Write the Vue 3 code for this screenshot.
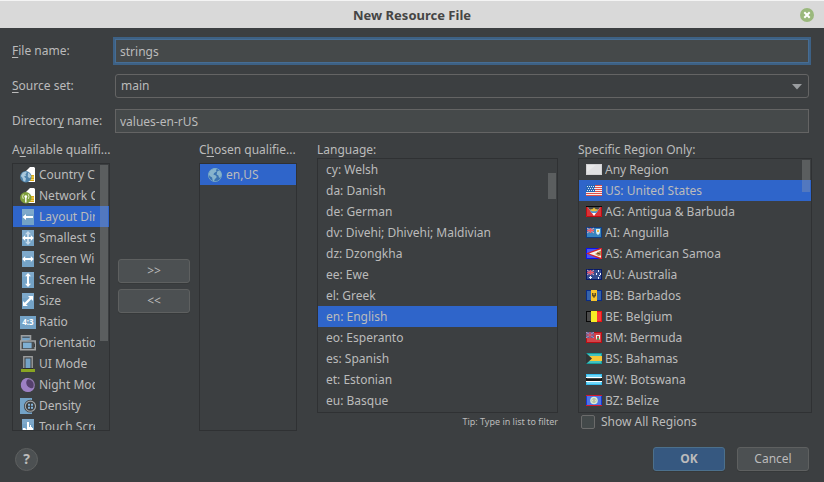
<script setup>
import { ref } from 'vue'

const fileName = ref('strings')
const sourceSet = ref('main')
const directoryName = ref('values-en-rUS')
const showAll = ref(false)

const qualifier = ref('layout')
const language = ref('en')
const region = ref('US')

const qualifiers = [
  { id: 'country', label: 'Country Code' },
  { id: 'network', label: 'Network Code' },
  { id: 'layout', label: 'Layout Direction' },
  { id: 'smallest', label: 'Smallest Screen Width' },
  { id: 'width', label: 'Screen Width' },
  { id: 'height', label: 'Screen Height' },
  { id: 'size', label: 'Size' },
  { id: 'ratio', label: 'Ratio' },
  { id: 'orientation', label: 'Orientation' },
  { id: 'uimode', label: 'UI Mode' },
  { id: 'night', label: 'Night Mode' },
  { id: 'density', label: 'Density' },
  { id: 'touch', label: 'Touch Screen' },
]

const languages = [
  ['cy', 'Welsh'],
  ['da', 'Danish'],
  ['de', 'German'],
  ['dv', 'Divehi; Dhivehi; Maldivian'],
  ['dz', 'Dzongkha'],
  ['ee', 'Ewe'],
  ['el', 'Greek'],
  ['en', 'English'],
  ['eo', 'Esperanto'],
  ['es', 'Spanish'],
  ['et', 'Estonian'],
  ['eu', 'Basque'],
]

const regions = [
  ['', 'Any Region'],
  ['US', 'United States'],
  ['AG', 'Antigua & Barbuda'],
  ['AI', 'Anguilla'],
  ['AS', 'American Samoa'],
  ['AU', 'Australia'],
  ['BB', 'Barbados'],
  ['BE', 'Belgium'],
  ['BM', 'Bermuda'],
  ['BS', 'Bahamas'],
  ['BW', 'Botswana'],
  ['BZ', 'Belize'],
]
</script>

<template>
  <div class="dialog" role="dialog" aria-labelledby="dialog-title">
    <header class="titlebar">
      <h1 id="dialog-title" class="title">New Resource File</h1>
      <button class="close" type="button" aria-label="Close">
        <svg width="14" height="14" viewBox="0 0 14 14">
          <circle cx="7" cy="7" r="7" fill="#9ab87c" />
          <path d="M4.3 4.3l5.4 5.4M9.7 4.3l-5.4 5.4" stroke="#fff" stroke-width="2" />
        </svg>
      </button>
    </header>

    <form class="body" @submit.prevent>
      <div class="fields">
        <label for="file-name"><u>F</u>ile name:</label>
        <input id="file-name" v-model="fileName" class="field focused" type="text" />

        <label for="source-set"><u>S</u>ource set:</label>
        <div class="select-wrap">
          <select id="source-set" v-model="sourceSet" class="field select">
            <option>main</option>
          </select>
          <svg class="arrow" width="10" height="6" viewBox="0 0 10 6"><path d="M0 0h10L5 5.5z" fill="#9a9da0" /></svg>
        </div>

        <label for="dir-name">Director<u>y</u> name:</label>
        <input id="dir-name" v-model="directoryName" class="field" type="text" />
      </div>

      <div class="columns">
        <div class="transfer">
          <section class="col narrow">
            <span id="available-label" class="caption">A<u>v</u>ailable qualifi...</span>
            <div class="list">
              <ul class="rows clipped" role="listbox" aria-labelledby="available-label">
                <li
                  v-for="q in qualifiers"
                  :key="q.id"
                  class="row"
                  :class="{ selected: q.id === qualifier }"
                  role="option"
                  :aria-selected="q.id === qualifier"
                  @click="qualifier = q.id"
                >
                  <svg class="icon" width="16" height="16" viewBox="0 0 16 16">
                    <template v-if="q.id === 'country' || q.id === 'network'">
                      <path d="M6 4l4-4h4l1 1v14H6z" fill="#fff" />
                      <path d="M10 8h4v6h-4z" fill="#dcaa12" />
                      <path d="M10 10h4M10 12.5h4" stroke="#f4d96b" />
                    </template>
                    <g v-if="q.id === 'country'">
                      <circle cx="5.8" cy="9.8" r="5.7" fill="#4f83ab" />
                      <path d="M.8 9l2-3.4 3-1.2 1 1.2-1.4 1.8.8 1.4-2.2.8 2 2-.8 3.2-1.8-.8-.8-3z" fill="#a9c8dc" />
                      <path d="M8 5.6l2 1.4 1.2 2.6-1.4 1.6-2-1.2z" fill="#a9c8dc" />
                    </g>
                    <g v-if="q.id === 'network'">
                      <circle cx="5.8" cy="9.8" r="5.7" fill="#7f9f3b" />
                      <circle cx="5.8" cy="8.6" r="1.4" fill="#fff" />
                      <path d="M5.8 9v5.5" stroke="#fff" stroke-width="1.4" />
                      <path d="M3.3 6.3q-1.4 2.3 0 4.6M8.3 6.3q1.4 2.3 0 4.6" fill="none" stroke="#e4edcf" />
                    </g>
                    <g v-if="['layout', 'smallest', 'width', 'height', 'size', 'touch'].includes(q.id)">
                      <path d="M2 0h12v16H2z" fill="#74a3c7" />
                      <path d="M2 0h12v5H2z" fill="#85aecd" opacity=".6" />
                    </g>
                    <path v-if="q.id === 'layout'" d="M2.5 8L6 5v2h7v2H6v2z" fill="#fff" />
                    <g v-if="q.id === 'smallest'">
                      <path d="M8 1l3 3.2H9v7.6h2L8 15l-3-3.2h2V4.2H5z" fill="#c6dae9" />
                      <path d="M2.2 8l3-3v2h5.6V5l3 3-3 3V9H5.2v2z" fill="#fff" />
                    </g>
                    <path v-if="q.id === 'width'" d="M2.2 8l3-3v2h5.6V5l3 3-3 3V9H5.2v2z" fill="#fff" />
                    <path v-if="q.id === 'height'" d="M8 1l3 3.2H9v7.6h2L8 15l-3-3.2h2V4.2H5z" fill="#fff" />
                    <path v-if="q.id === 'size'" d="M8 3h5v5l-1.7-1.7-5.2 5.2L8 13H3V8l1.6 1.7 5-5z" fill="#fff" />
                    <g v-if="q.id === 'ratio'">
                      <path d="M0 2h16v13H0z" fill="#74a3c7" />
                      <text x="8" y="11" class="ratio">4:3</text>
                    </g>
                    <g v-if="q.id === 'orientation'">
                      <path d="M1.5 7V.8h9V5" fill="#74a3c7" stroke="#9b9d9e" stroke-width="1.6" />
                      <path d="M2.3 2.2h7.4" stroke="#3c3f41" />
                      <path d="M.8 6h14.4v8.8H.8z" fill="#4a4d4f" stroke="#a3a5a6" stroke-width="1.6" />
                      <path d="M3 7.6h8.6v5.6H3z" fill="#7fb0d4" />
                      <path d="M14.5 8.5v3.5" stroke="#3c3f41" />
                    </g>
                    <g v-if="q.id === 'uimode'">
                      <path d="M3.8.8h8.4v12H3.8z" fill="#3c3f41" stroke="#9b9d9e" stroke-width="1.4" />
                      <path d="M5.5 2.5h5V12h-5z" fill="#74a3c7" />
                      <path d="M1 13h14v3H1z" fill="#8aa522" />
                      <path d="M3 12.5h10" stroke="#2c2e30" />
                    </g>
                    <g v-if="q.id === 'night'">
                      <circle cx="8" cy="8" r="6.3" fill="#55406d" stroke="#8f79ab" stroke-width="1.2" />
                      <path d="M9 1A7 7 0 1 0 14.4 10.4 5 5 0 0 1 9 1z" fill="#9d80c4" />
                    </g>
                    <g v-if="q.id === 'density'">
                      <path d="M0 0h12v16H0z" fill="#74a3c7" />
                      <circle cx="10.4" cy="8.2" r="5.2" fill="#3c3f41" stroke="#3c3f41" stroke-width="2.4" />
                      <circle cx="10.4" cy="8.2" r="5.1" fill="#3c3f41" stroke="#a5a7a8" stroke-width="1.1" />
                      <path d="M8 5.8h2v2H8zM11 5.8h2v2h-2zM8 8.8h2v2H8zM11 8.8h2v2h-2z" fill="#85b5dc" />
                    </g>
                    <path v-if="q.id === 'touch'" d="M7 3h2v5h1V6h1v2h1v1h1v7H5v-2L3 11V9h2l2 2z" fill="#fff" />
                  </svg>
                  <span class="text">{{ q.label }}</span>
                </li>
              </ul>
              <div class="thumb thumb-available"></div>
            </div>
          </section>

          <div class="movers">
            <button class="button" type="button" aria-label="Add qualifier">&gt;&gt;</button>
            <button class="button" type="button" aria-label="Remove qualifier">&lt;&lt;</button>
          </div>

          <section class="col narrow">
            <span id="chosen-label" class="caption">C<u>h</u>osen qualifie...</span>
            <div class="list">
              <ul class="rows" role="listbox" aria-labelledby="chosen-label">
                <li class="row selected" role="option" aria-selected="true">
                  <svg class="icon" width="16" height="16" viewBox="0 0 16 16">
                    <circle cx="8" cy="8" r="6.6" fill="#3a72b0" stroke="#6d9fc4" />
                    <path d="M1.5 7l1.8-3.4 3.4-2 3.3-.2-1 1.6 .6 1.4-2.4 1.6-.8 1.6 2.4.8 1 1.6-2.2 2.4L7 14.6l-1.3-.8-.6-3.2-2.4-1.6z" fill="#86b3cc" />
                    <path d="M10.2 4.4l1.8-1 1.6 1.4 1 2.8-1 3-1.6.2-.6-2.2-1.8-1z" fill="#86b3cc" />
                  </svg>
                  <span class="text">en,US</span>
                </li>
              </ul>
            </div>
          </section>
        </div>

        <section class="col language">
          <span id="language-label" class="caption">Language:</span>
          <div class="list">
            <ul class="rows" role="listbox" aria-labelledby="language-label">
              <li
                v-for="[code, name] in languages"
                :key="code"
                class="row"
                :class="{ selected: code === language }"
                role="option"
                :aria-selected="code === language"
                @click="language = code"
              >{{ code }}: {{ name }}</li>
            </ul>
            <div class="thumb thumb-language"></div>
          </div>
          <div class="under tip">Tip: Type in list to filter</div>
        </section>

        <section class="col region">
          <span id="region-label" class="caption">Specific Region Only:</span>
          <div class="list">
            <ul class="rows" role="listbox" aria-labelledby="region-label">
              <li
                v-for="[code, name] in regions"
                :key="code"
                class="row"
                :class="{ selected: code === region }"
                role="option"
                :aria-selected="code === region"
                @click="region = code"
              >
                <svg class="icon" width="16" height="11" viewBox="0 0 16 11">
                  <g v-if="code === ''">
                    <path d="M0 0h16v11H0z" fill="#d2d2d4" />
                    <path d="M1 1h14v9H1z" fill="#e0e0e2" />
                    <path d="M1 1h9L1 8z" fill="#e8e8e9" />
                  </g>
                  <g v-else-if="code === 'US'">
                    <path d="M0 0h16v11H0z" fill="#f5eeee" />
                    <path d="M0 .5h16M0 2.5h16M0 4.5h16M0 6.5h16M0 8.5h16M0 10.5h16" stroke="#de4f48" />
                    <path d="M0 0h9v7H0z" fill="#2866b4" />
                    <path d="M1 1.5h8M2 3.5h7M1 5.5h8" stroke="#dbe7f5" stroke-dasharray="1 1" />
                  </g>
                  <g v-else-if="code === 'AG'">
                    <path d="M0 0h16v11H0z" fill="#d83236" />
                    <path d="M1 0h14l-7 10z" fill="#fff" />
                    <path d="M1 0h14l-3 4H4z" fill="#45494b" />
                    <path d="M3.6 4h8.8l-2 3H5.6z" fill="#4e96d1" />
                    <path d="M4 4l1-1 1 .5L8 1.5l2 2 1-.5 1 1-2 1.2H6z" fill="#eabf3a" />
                    <path d="M0 .5h16" stroke="#080808" />
                    <path d="M.5 1v9.5h15V1" fill="none" stroke="#c00c12" />
                  </g>
                  <g v-else-if="code === 'AI'">
                    <path d="M0 0h16v11H0z" fill="#123d82" />
                    <path d="M1 1h14v9H1z" fill="#3784bf" />
                    <path d="M1 1l7 5M8 1L1 6" stroke="#e6a8b0" />
                    <path d="M4.5 1v5M1 3.5h7" stroke="#e95b68" stroke-width="1.6" />
                    <path d="M10 2h4v3q0 2-2 3-2-1-2-3z" fill="#d8edf2" />
                    <path d="M11 3h2v2h-2z" fill="#ecc04b" />
                  </g>
                  <g v-else-if="code === 'AS'">
                    <path d="M0 0h16v11H0z" fill="#0b14ee" />
                    <path d="M1 1h14v9H1z" fill="#4c56ef" />
                    <path d="M0 5.5L14 0h2v11h-2z" fill="#d3232a" />
                    <path d="M3 5.5L15 1.2v8.6z" fill="#f7f1e7" />
                    <path d="M9 6l3-2 3-1.5v5L12 8l-1-1z" fill="#b98b52" />
                    <path d="M11 5l3 1" stroke="#624020" />
                  </g>
                  <g v-else-if="code === 'AU'">
                    <path d="M0 0h16v11H0z" fill="#081a68" />
                    <path d="M1 1h14v9H1z" fill="#344b8f" />
                    <path d="M1 1l7 5M8 1L1 6" stroke="#dda6b8" />
                    <path d="M4.5 1v5M1 3.5h7" stroke="#e3536b" stroke-width="1.6" />
                    <path d="M4 7h1v1H4zM3 8h3v1H3zM4 9h1v1H4zM12 1h1v2h-1zM10 4h1v2h-1zM14 4h1v2h-1zM12 8h1v2h-1zM13 6h1v1h-1z" fill="#eef3ff" />
                  </g>
                  <g v-else-if="code === 'BB'">
                    <path d="M0 0h16v11H0z" fill="#0a2c86" />
                    <path d="M1 1h14v9H1z" fill="#3563aa" />
                    <path d="M5 0h6v11H5z" fill="#f7c52c" />
                    <path d="M6 3h1v2h.5V3h1v2H9V3h1v3L8.5 7v1h-1V7L6 6z" fill="#60501c" />
                  </g>
                  <g v-else-if="code === 'BE'">
                    <path d="M0 0h5v11H0z" fill="#080808" />
                    <path d="M1 1h4v9H1z" fill="#4b4b4b" />
                    <path d="M5 0h6v11H5z" fill="#f7ee25" />
                    <path d="M11 0h5v11h-5z" fill="#ec1414" />
                    <path d="M11 1h4v9h-4z" fill="#f63b3b" />
                  </g>
                  <g v-else-if="code === 'BM'">
                    <path d="M0 0h16v11H0z" fill="#b80d14" />
                    <path d="M1 1h14v9H1z" fill="#d2444a" />
                    <path d="M0 0h8v6H0z" fill="#57639c" />
                    <path d="M0 0l8 6M8 0L0 6" stroke="#d0a3b8" stroke-width=".8" />
                    <path d="M4 0v6M0 3h8" stroke="#df4959" stroke-width="1.2" />
                    <path d="M10 3h4v3q0 2-2 2-2 0-2-2z" fill="#f1f4ef" />
                    <path d="M11 4h2v2h-2z" fill="#b94b45" />
                    <path d="M11 6h2v2h-2z" fill="#4c9a52" />
                  </g>
                  <g v-else-if="code === 'BS'">
                    <path d="M0 0h16v11H0z" fill="#159e9f" />
                    <path d="M1 1h14v9H1z" fill="#43c1c0" />
                    <path d="M0 3h16v5H0z" fill="#f6c636" />
                    <path d="M0 0l6 5.5L0 11z" fill="#303536" />
                  </g>
                  <g v-else-if="code === 'BW'">
                    <path d="M0 0h16v11H0z" fill="#35bced" />
                    <path d="M1 1h14v9H1z" fill="#70d7f8" />
                    <path d="M0 3h16v5H0z" fill="#fff" />
                    <path d="M0 4h16v3H0z" fill="#171717" />
                    <path d="M1 4h14v1H1z" fill="#444" />
                  </g>
                  <g v-else>
                    <path d="M0 0h16v11H0z" fill="#1736d4" />
                    <path d="M1 1h14v9H1z" fill="#4d74e6" />
                    <path d="M0 .5h16M0 10.5h16" stroke="#d5172c" />
                    <circle cx="8" cy="5.5" r="3.8" fill="#d9ebd8" />
                    <circle cx="8" cy="5.5" r="2.1" fill="#f3f5e6" stroke="#9dbd98" stroke-width=".8" />
                    <path d="M8 4v3" stroke="#8b8b62" />
                  </g>
                </svg>
                <span class="text"><template v-if="code">{{ code }}: </template>{{ name }}</span>
              </li>
            </ul>
            <div class="thumb thumb-region"></div>
          </div>
          <label class="under check">
            <input v-model="showAll" type="checkbox" />
            <span>Show All Regions</span>
          </label>
        </section>
      </div>

      <footer class="footer">
        <button class="help" type="button" aria-label="Help">?</button>
        <div class="actions">
          <button class="button primary" type="submit">OK</button>
          <button class="button" type="button">Cancel</button>
        </div>
      </footer>
    </form>
  </div>
</template>

<style>
body {
  background: #3c3f41;
}
</style>

<style scoped>
* {
  box-sizing: border-box;
}

.dialog {
  display: flex;
  flex-direction: column;
  height: 100vh;
  background: #3c3f41;
  color: #bbbbbb;
  font: 12px/16px "Noto Sans", "Open Sans", sans-serif;
}

button,
input,
select {
  font: inherit;
  color: inherit;
  margin: 0;
}

u {
  text-decoration: underline;
  text-underline-offset: 2px;
  text-decoration-skip-ink: none;
}

.titlebar {
  display: grid;
  grid-template-columns: 1fr auto 1fr;
  align-items: center;
  height: 28px;
  flex: none;
  padding: 0 10px;
  background: #d9d9d9;
  border-top: 1px solid #f4f4f4;
}

.title {
  grid-column: 2;
  margin: 0;
  font-size: 13px;
  font-weight: 700;
  color: #454545;
}

.close {
  justify-self: end;
  display: flex;
  padding: 0;
  border: 0;
  background: none;
}

.body {
  display: flex;
  flex-direction: column;
  flex: 1;
  min-height: 0;
  padding: 11px 12px;
}

.fields {
  display: grid;
  grid-template-columns: 91px 1fr;
  column-gap: 12px;
  row-gap: 11px;
  align-items: center;
  padding-right: 3px;
}

.field {
  display: block;
  width: 100%;
  height: 24px;
  padding: 0 4px;
  border: 1px solid #646464;
  border-radius: 0;
  background: #45494a;
  outline: none;
}

.focused {
  border-color: #466d94;
  box-shadow: 0 0 0 2px #3d6185;
}

.select-wrap {
  position: relative;
}

.select {
  appearance: none;
  padding: 0 5px;
  border-radius: 3px;
  background: #3c3f41;
}

.arrow {
  position: absolute;
  right: 7px;
  top: 10px;
  pointer-events: none;
}

.columns {
  display: flex;
  gap: 20px;
  flex: 1;
  min-height: 0;
  padding: 8px 0 16px;
}

.transfer {
  display: flex;
  flex: none;
  gap: 8px;
}

.col {
  display: flex;
  flex-direction: column;
  min-width: 0;
  min-height: 0;
}

.narrow {
  width: 98px;
  gap: 5px;
}

.language {
  flex: 241 1 0;
}

.region {
  flex: 234 1 0;
}

.caption {
  height: 17px;
  line-height: 18px;
  flex: none;
  white-space: nowrap;
}

.list {
  position: relative;
  flex: 1;
  min-height: 0;
  border: 1px solid #2f3133;
  overflow: hidden;
}

.rows {
  margin: 0;
  padding: 0;
  list-style: none;
}

.row {
  display: flex;
  align-items: center;
  gap: 3px;
  height: 21px;
  padding: 0 8px;
  white-space: nowrap;
}

.row:has(.icon) {
  padding: 0 7px;
}

.clipped .row {
  padding: 0 14px 0 7px;
}

.selected {
  background: #2f65ca;
}

.icon {
  flex: none;
}

.text {
  overflow: hidden;
}

.ratio {
  font: 700 8px "Noto Sans", sans-serif;
  fill: #fff;
  text-anchor: middle;
}

.thumb {
  position: absolute;
  right: 1px;
  width: 8px;
  background: rgba(166, 166, 166, 0.3);
}

.thumb-available {
  top: 1px;
  height: 66%;
}

.thumb-language {
  top: 14px;
  height: 26px;
}

.thumb-region {
  top: 1px;
  height: 32px;
}

.under {
  height: 18px;
  flex: none;
}

.tip {
  text-align: right;
  font-size: 9px;
  line-height: 18px;
}

.check {
  display: flex;
  align-items: center;
  gap: 6px;
  padding-left: 3px;
  line-height: 18px;
}

.check input {
  appearance: none;
  width: 14px;
  height: 14px;
  border: 1px solid #6b6b6b;
  border-radius: 2px;
  background: #43494a;
}

.check input:checked {
  background: #365880;
}

.movers {
  display: flex;
  flex-direction: column;
  justify-content: center;
  gap: 6px;
  width: 73px;
  padding-right: 1px;
}

.button {
  width: 72px;
  height: 24px;
  padding: 0;
  border: 1px solid #5e6060;
  border-radius: 3px;
  background: #4c5052;
  box-shadow: 0 1px 0 #36393a;
}

.primary {
  background: #365880;
  border-color: #4c708c;
  font-weight: 700;
}

.footer {
  display: flex;
  align-items: center;
  justify-content: space-between;
  flex: none;
  padding: 0 3px;
}

.help {
  width: 23px;
  height: 23px;
  padding: 0;
  border: 1px solid #5e6060;
  border-radius: 50%;
  background: #4c5052;
  font-size: 14px;
  font-weight: 700;
  line-height: 20px;
}

.actions {
  display: flex;
  gap: 12px;
}
</style>
